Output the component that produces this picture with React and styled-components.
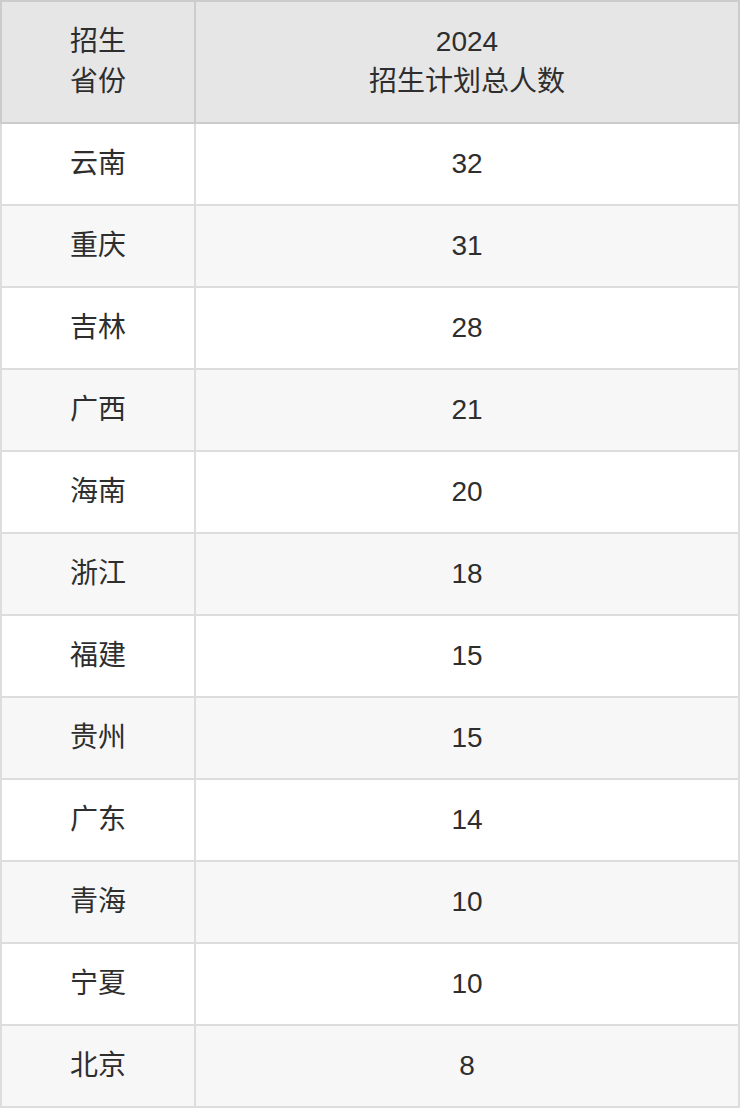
import React from "react";
import styled, { createGlobalStyle } from "styled-components";

const Global = createGlobalStyle`
  html, body { margin: 0; padding: 0; background: #fff; }
  body { font-family: "Liberation Sans", "Noto Sans CJK SC", sans-serif; }
`;

const Table = styled.table`
  width: 740px;
  border-collapse: collapse;
  table-layout: fixed;
  font-family: "Liberation Sans", "Noto Sans CJK SC", sans-serif;
  font-size: 28px;
  line-height: 40px;
  color: #2e2e2e;
`;

const HeadCell = styled.th`
  background: #e6e6e6;
  border: 2px solid #ccc;
  padding: 20px 10px;
  font-weight: normal;
  text-align: center;
  vertical-align: middle;
`;

const Row = styled.tr`
  background: ${(p) => (p.$alt ? "#f7f7f7" : "#fff")};
`;

const Cell = styled.td`
  border: 2px solid #ddd;
  padding: 20px 10px;
  text-align: center;
  vertical-align: middle;
  height: 40px;
`;

const rows = [
  ["云南", "32"],
  ["重庆", "31"],
  ["吉林", "28"],
  ["广西", "21"],
  ["海南", "20"],
  ["浙江", "18"],
  ["福建", "15"],
  ["贵州", "15"],
  ["广东", "14"],
  ["青海", "10"],
  ["宁夏", "10"],
  ["北京", "8"],
];

export default function App() {
  return (
    <>
      <Global />
      <Table>
        <colgroup>
          <col style={{ width: 194 }} />
          <col />
        </colgroup>
        <thead>
          <tr>
            <HeadCell>
              招生
              <br />
              省份
            </HeadCell>
            <HeadCell>
              2024
              <br />
              招生计划总人数
            </HeadCell>
          </tr>
        </thead>
        <tbody>
          {rows.map(([p, n], i) => (
            <Row key={p} $alt={i % 2 === 1}>
              <Cell>{p}</Cell>
              <Cell>{n}</Cell>
            </Row>
          ))}
        </tbody>
      </Table>
    </>
  );
}
